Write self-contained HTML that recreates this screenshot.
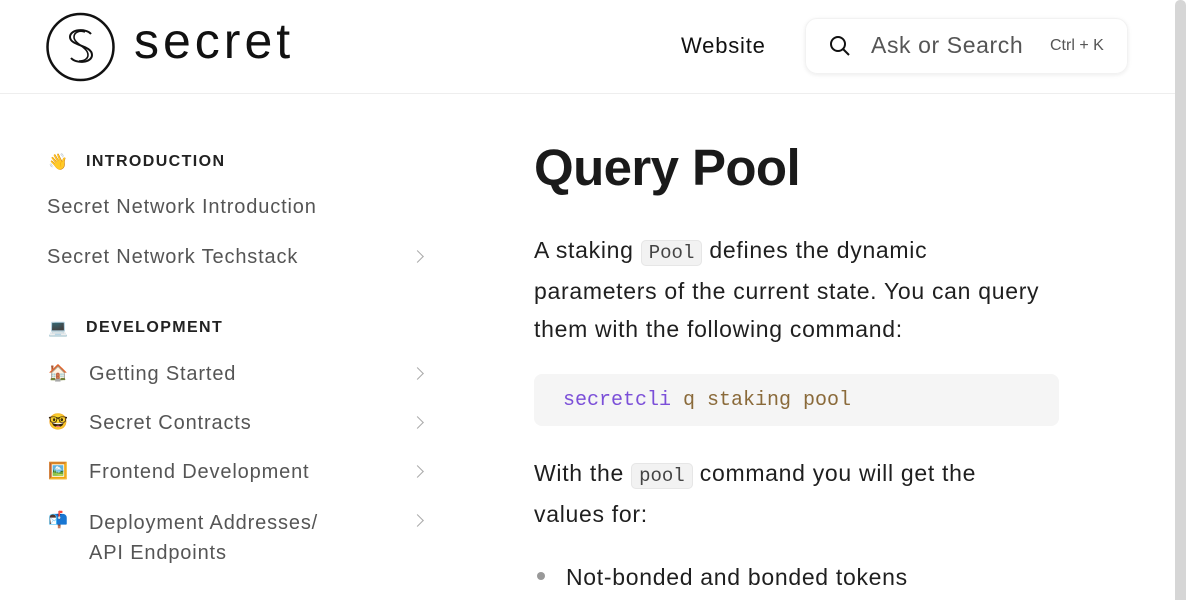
<!DOCTYPE html>
<html><head><meta charset="utf-8"><style>
*{margin:0;padding:0;box-sizing:border-box}
body{width:1186px;height:600px;overflow:hidden;background:#fff;font-family:"Liberation Sans","Noto Sans CJK JP",sans-serif;color:#1a1a1a;position:relative}
.a{position:absolute;white-space:nowrap}
.side{color:#555;font-size:20px;letter-spacing:.85px}
.hd{font-size:16px;font-weight:bold;color:#222;letter-spacing:1.4px}
.chev{position:absolute;left:413px;width:9px;height:9px;border-right:1.5px solid #aaa;border-top:1.5px solid #aaa;transform:rotate(45deg)}
.em{position:absolute;left:48px;width:20px;height:18px;font-size:16px;line-height:18px}
.p{font-size:23px;line-height:38px;color:#1f1f1f;letter-spacing:.7px}
code{font-family:"Liberation Mono",monospace;font-size:19px;letter-spacing:0;background:#f2f2f2;border:1px solid #e6e6e6;border-radius:5px;padding:1px 7px;color:#444}
</style></head><body>
<svg class="a" style="left:45px;top:12px" width="72" height="70" viewBox="0 0 72 70"><circle cx="35.5" cy="35" r="33" fill="none" stroke="#111" stroke-width="2.5"/>
<path d="M46 22c-5-6-21-5-21 3c0 9 22 8 22 18c0 8-16 9-21 3" fill="none" stroke="#111" stroke-width="2"/>
<path d="M40 20c-5-2-11 0-11 5c0 7 14 10 14 18c0 4-4 6-9 6" fill="none" stroke="#111" stroke-width="1.6"/></svg>
<div class="a" style="left:134px;top:12px;font-size:50px;color:#111;letter-spacing:4px">secret</div>
<div class="a" style="left:681px;top:33px;font-size:22px;color:#111;letter-spacing:.8px">Website</div>
<div class="a" style="left:805px;top:18px;width:323px;height:56px;border-radius:12px;box-shadow:0 1px 4px rgba(0,0,0,.08);border:1px solid #f2f2f2"></div>
<svg class="a" style="left:828px;top:34px" width="24" height="24" viewBox="0 0 24 24"><circle cx="10" cy="10" r="7" fill="none" stroke="#111" stroke-width="2"/><path d="M15 15l6 6" stroke="#111" stroke-width="2"/></svg>
<div class="a" style="left:871px;top:32px;font-size:23px;color:#555;letter-spacing:.6px">Ask or Search</div>
<div class="a" style="left:1050px;top:37px;font-size:16px;color:#555">Ctrl + K</div>
<div class="a" style="left:0;top:93px;width:1175px;height:1px;background:#eee"></div>
<div class="a" style="left:1175px;top:0;width:11px;height:600px;background:#d6d6d6;border-radius:5px 5px 0 0"></div>

<div class="em" style="top:154px">👋</div><div class="a hd" style="left:86px;top:153px">INTRODUCTION</div>
<div class="a side" style="left:47px;top:196px">Secret Network Introduction</div>
<div class="a side" style="left:47px;top:246px">Secret Network Techstack</div><div class="chev" style="top:252px"></div>
<div class="em" style="top:320px">💻</div><div class="a hd" style="left:86px;top:319px">DEVELOPMENT</div>
<div class="em" style="top:365px">🏠</div><div class="a side" style="left:89px;top:363px">Getting Started</div><div class="chev" style="top:369px"></div>
<div class="em" style="top:414px">🤓</div><div class="a side" style="left:89px;top:412px">Secret Contracts</div><div class="chev" style="top:418px"></div>
<div class="em" style="top:463px">🖼️</div><div class="a side" style="left:89px;top:461px">Frontend Development</div><div class="chev" style="top:467px"></div>
<div class="em" style="top:512px">📬</div><div class="a side" style="left:89px;top:508px;line-height:30px">Deployment Addresses/<br>API Endpoints</div><div class="chev" style="top:516px"></div>

<div class="a" style="left:534px;top:138px;font-size:51px;font-weight:bold;color:#1a1a1a;letter-spacing:-.6px">Query Pool</div>
<div class="a p" style="left:534px;top:231px">A staking <code>Pool</code> defines the dynamic<br>parameters of the current state. You can query<br>them with the following command:</div>
<div class="a" style="left:534px;top:374px;width:525px;height:52px;background:#f5f5f5;border-radius:8px"></div>
<div class="a" style="left:563px;top:389px;font-family:'Liberation Mono',monospace;font-size:20px;color:#8a6a3a"><span style="color:#7b4fd8">secretcli</span> q staking pool</div>
<div class="a p" style="left:534px;top:454px">With the <code>pool</code> command you will get the<br>values for:</div>
<div class="a" style="left:537px;top:572px;width:8px;height:8px;border-radius:50%;background:#999"></div>
<div class="a p" style="left:566px;top:558px">Not-bonded and bonded tokens</div>
</body></html>
